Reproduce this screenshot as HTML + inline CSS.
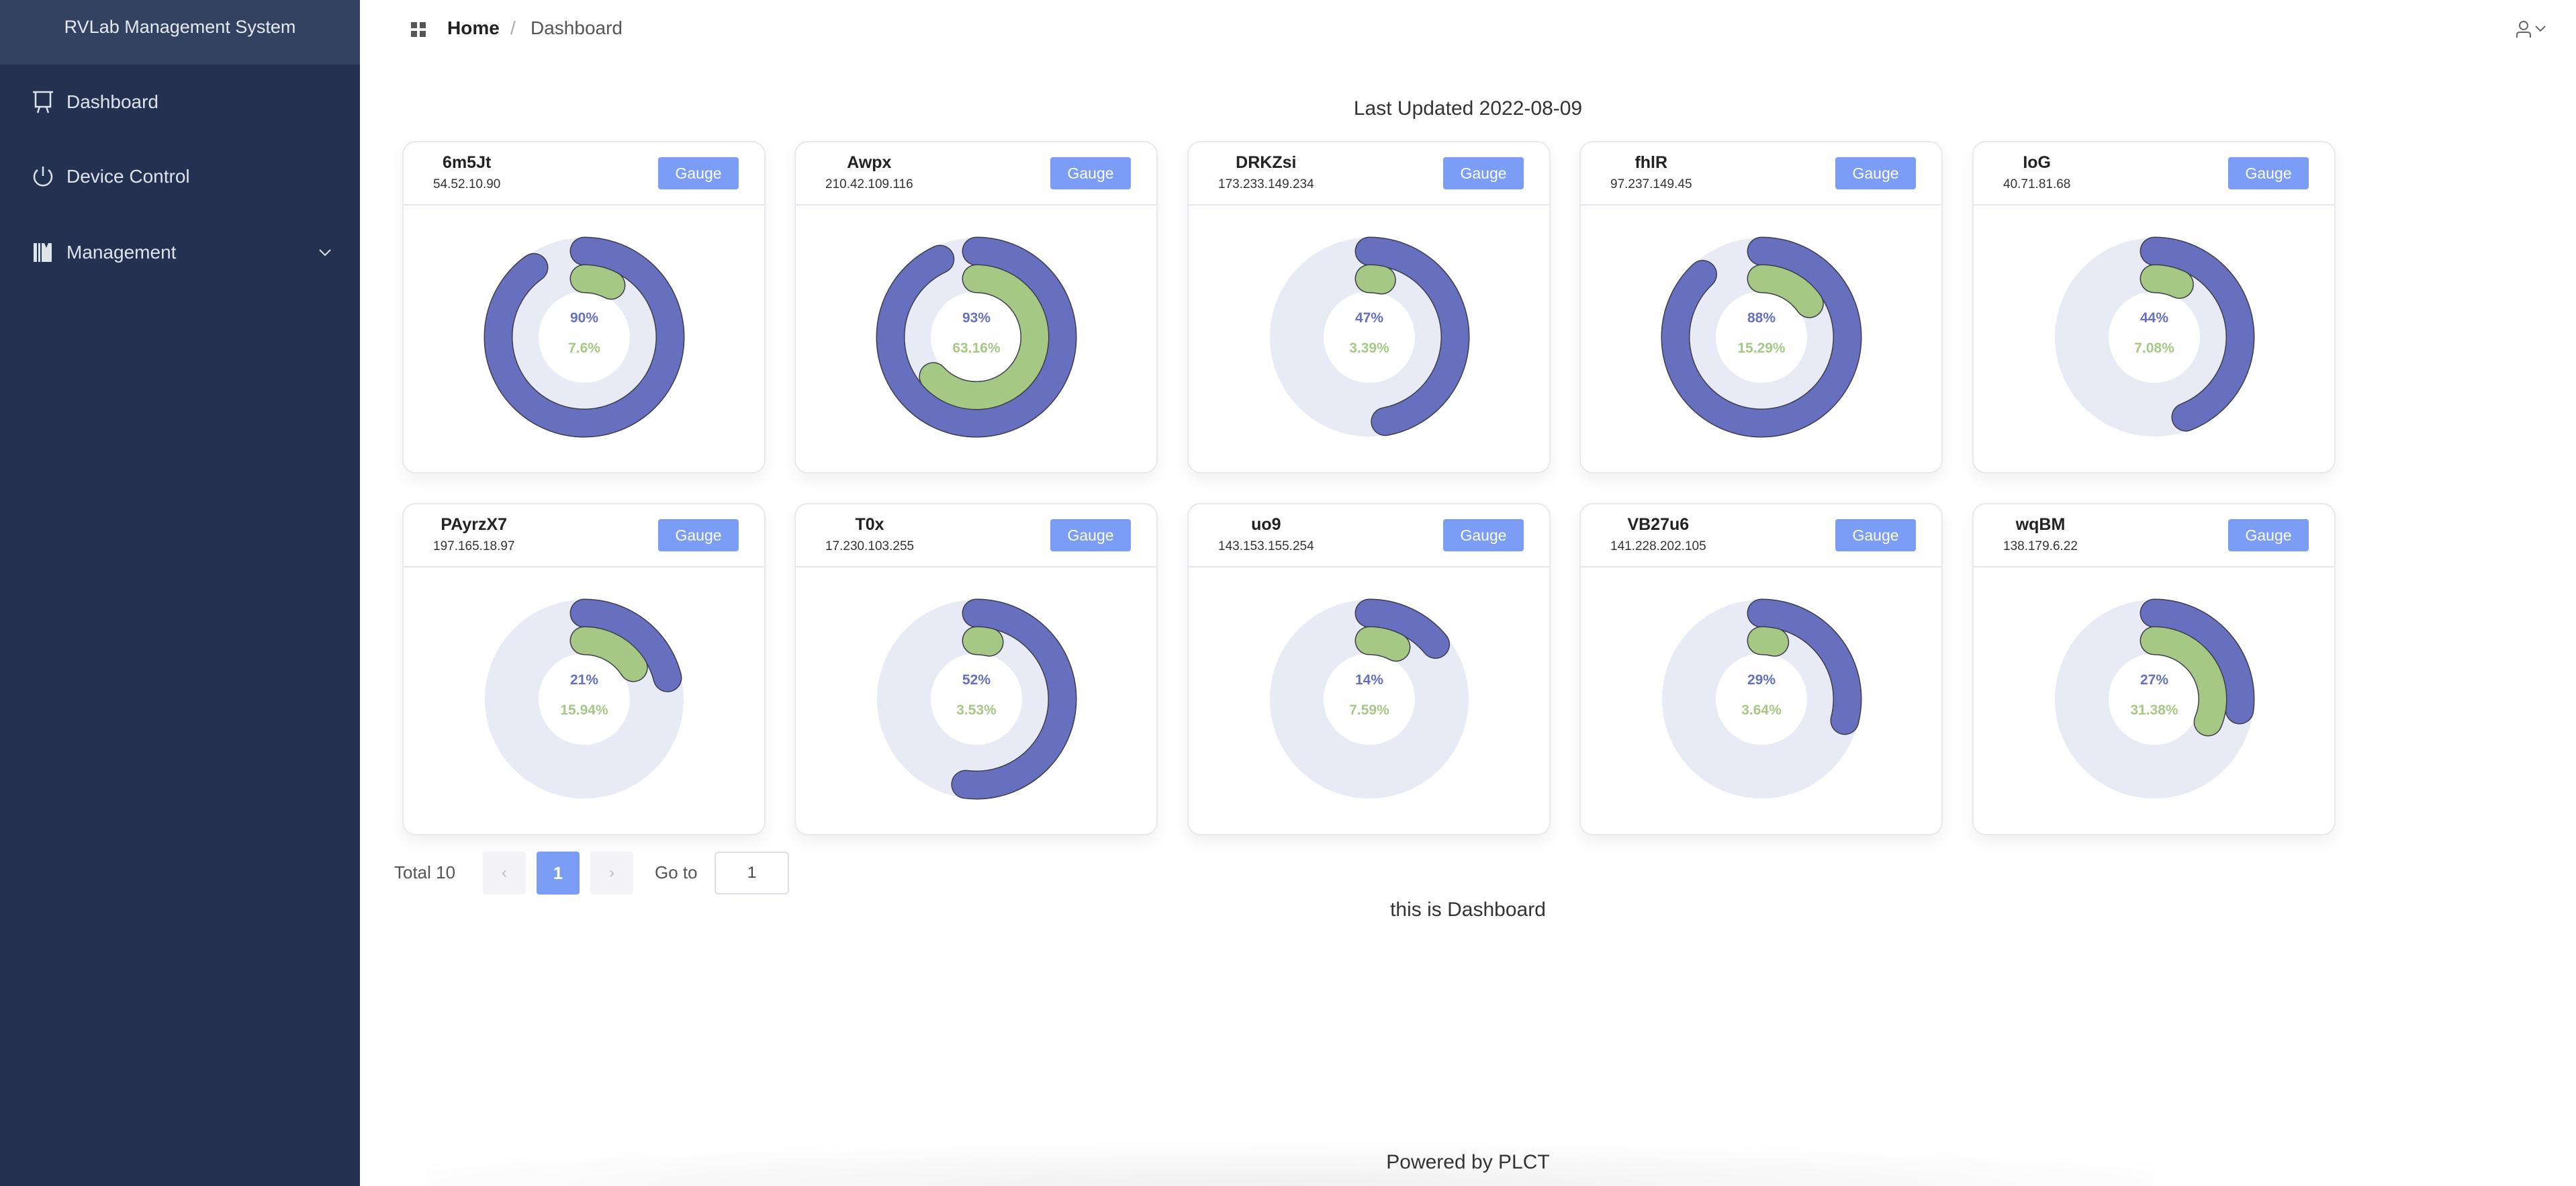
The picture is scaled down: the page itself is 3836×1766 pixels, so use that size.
<!DOCTYPE html>
<html style="width:3836px;height:1766px;overflow:hidden"><head><meta charset="utf-8"><style>
*{margin:0;padding:0;box-sizing:border-box}
body{width:3836px;height:1766px;overflow:hidden;background:#fff;font-family:"Liberation Sans",sans-serif;position:relative}
.side{position:absolute;left:0;top:0;width:536px;height:1766px;background:#253151}
.sh{height:96px;background:#344261;color:#e6e9f0;font-size:27px;text-align:center;line-height:80px}
.mi{position:absolute;left:0;width:536px;color:#dfe3ea;font-size:28px}
.mi span{position:absolute;left:99px;top:-16px}
.mi svg{position:absolute;left:46px;top:-18px}
.abs{position:absolute}
.card{position:absolute;width:541px;height:495px;background:#fff;border:2px solid #e8e8ee;border-radius:20px;box-shadow:0 10px 24px rgba(0,0,0,0.06)}
.card .hd{position:absolute;left:0;top:0;width:537px;height:94px;border-bottom:2px solid #e6e6ee}
.card .ti{position:absolute;left:44px;top:12px;text-align:center;color:#222}
.card .ti b{display:block;font-size:25px;line-height:36px}
.card .ti i{display:block;font-style:normal;font-size:19px;color:#333;line-height:30px}
.btn{position:absolute;left:379px;top:22px;width:120px;height:48px;background:#7b9df6;border-radius:4px;color:#fff;font-size:23px;text-align:center;line-height:48px}
.card svg{position:absolute;left:-2px;top:-2px}
</style></head><body>
<div class="side">
<div class="sh">RVLab Management System</div>
<div class="mi" style="top:152px"><svg width="36" height="36" viewBox="0 0 36 36" fill="none" stroke="#dfe3ea" stroke-width="2.5"><path d="M3 3h30M7 3v22h22V3M13 25l-3 9M23 25l3 9"/></svg><span>Dashboard</span></div>
<div class="mi" style="top:263px"><svg width="36" height="36" viewBox="0 0 36 36" fill="none" stroke="#dfe3ea" stroke-width="2.5"><path d="M18 3v14M10 8a13 13 0 1 0 16 0"/></svg><span>Device Control</span></div>
<div class="mi" style="top:376px"><svg width="36" height="36" viewBox="0 0 36 36" fill="#dfe3ea"><rect x="4" y="4" width="5" height="28"/><rect x="11" y="4" width="3" height="28"/><path d="M16 4h4l3 7 3-7h5v28H16z"/></svg><span>Management</span><svg style="left:472px;top:-8px" width="24" height="16" viewBox="0 0 24 16" fill="none" stroke="#dfe3ea" stroke-width="2"><path d="M4 4l8 8 8-8"/></svg></div>
</div>
<svg class="abs" style="left:612px;top:33px" width="22" height="22" viewBox="0 0 22 22" fill="#555"><rect x="0" y="0" width="9" height="9"/><rect x="13" y="0" width="9" height="9"/><rect x="0" y="13" width="9" height="9"/><rect x="13" y="13" width="9" height="9"/></svg>
<div class="abs" style="left:666px;top:26px;font-size:28px;font-weight:bold;color:#222">Home</div>
<div class="abs" style="left:760px;top:26px;font-size:28px;color:#aaa">/</div>
<div class="abs" style="left:790px;top:26px;font-size:28px;color:#555">Dashboard</div>
<svg class="abs" style="left:3745px;top:30px" width="56" height="28" viewBox="0 0 56 28" fill="none" stroke="#666" stroke-width="2"><circle cx="13" cy="8" r="6"/><path d="M3 26v-4q0-4 4-4h12q4 0 4 4v4"/><path d="M31 9l7 7 7-7"/></svg>
<div class="abs" style="left:536px;width:3300px;top:145px;text-align:center;font-size:30px;color:#333">Last Updated 2022-08-09</div>

<div class="card" style="left:599px;top:210px"><div class="hd"></div><div class="ti"><b>6m5Jt</b><i>54.52.10.90</i></div><div class="btn">Gauge</div>
<svg width="541" height="495"><g transform="translate(271 292) rotate(-90)" fill="none"><circle r="108" stroke="#e8eaf6" stroke-width="80"/>
<circle r="128" stroke="#3d3d4a" stroke-width="43" stroke-linecap="round" stroke-dasharray="723.8 2000"/><circle r="128" stroke="#6670bf" stroke-width="40" stroke-linecap="round" stroke-dasharray="723.8 2000"/>
<circle r="87" stroke="#3d3d4a" stroke-width="43" stroke-linecap="round" stroke-dasharray="41.5 2000"/><circle r="87" stroke="#a6c885" stroke-width="40" stroke-linecap="round" stroke-dasharray="41.5 2000"/></g>
<text x="271" y="270" text-anchor="middle" font-size="21" font-weight="bold" fill="#6670bf" font-family="Liberation Sans">90%</text><text x="271" y="315" text-anchor="middle" font-size="21" font-weight="bold" fill="#a6c885" font-family="Liberation Sans">7.6%</text></svg></div>

<div class="card" style="left:1183px;top:210px"><div class="hd"></div><div class="ti"><b>Awpx</b><i>210.42.109.116</i></div><div class="btn">Gauge</div>
<svg width="541" height="495"><g transform="translate(271 292) rotate(-90)" fill="none"><circle r="108" stroke="#e8eaf6" stroke-width="80"/>
<circle r="128" stroke="#3d3d4a" stroke-width="43" stroke-linecap="round" stroke-dasharray="748 2000"/><circle r="128" stroke="#6670bf" stroke-width="40" stroke-linecap="round" stroke-dasharray="748 2000"/>
<circle r="87" stroke="#3d3d4a" stroke-width="43" stroke-linecap="round" stroke-dasharray="345.3 2000"/><circle r="87" stroke="#a6c885" stroke-width="40" stroke-linecap="round" stroke-dasharray="345.3 2000"/></g>
<text x="271" y="270" text-anchor="middle" font-size="21" font-weight="bold" fill="#6670bf" font-family="Liberation Sans">93%</text><text x="271" y="315" text-anchor="middle" font-size="21" font-weight="bold" fill="#a6c885" font-family="Liberation Sans">63.16%</text></svg></div>

<div class="card" style="left:1768px;top:210px"><div class="hd"></div><div class="ti"><b>DRKZsi</b><i>173.233.149.234</i></div><div class="btn">Gauge</div>
<svg width="541" height="495"><g transform="translate(271 292) rotate(-90)" fill="none"><circle r="108" stroke="#e8eaf6" stroke-width="80"/>
<circle r="128" stroke="#3d3d4a" stroke-width="43" stroke-linecap="round" stroke-dasharray="378 2000"/><circle r="128" stroke="#6670bf" stroke-width="40" stroke-linecap="round" stroke-dasharray="378 2000"/>
<circle r="87" stroke="#3d3d4a" stroke-width="43" stroke-linecap="round" stroke-dasharray="18.5 2000"/><circle r="87" stroke="#a6c885" stroke-width="40" stroke-linecap="round" stroke-dasharray="18.5 2000"/></g>
<text x="271" y="270" text-anchor="middle" font-size="21" font-weight="bold" fill="#6670bf" font-family="Liberation Sans">47%</text><text x="271" y="315" text-anchor="middle" font-size="21" font-weight="bold" fill="#a6c885" font-family="Liberation Sans">3.39%</text></svg></div>

<div class="card" style="left:2352px;top:210px"><div class="hd"></div><div class="ti"><b>fhlR</b><i>97.237.149.45</i></div><div class="btn">Gauge</div>
<svg width="541" height="495"><g transform="translate(271 292) rotate(-90)" fill="none"><circle r="108" stroke="#e8eaf6" stroke-width="80"/>
<circle r="128" stroke="#3d3d4a" stroke-width="43" stroke-linecap="round" stroke-dasharray="707.7 2000"/><circle r="128" stroke="#6670bf" stroke-width="40" stroke-linecap="round" stroke-dasharray="707.7 2000"/>
<circle r="87" stroke="#3d3d4a" stroke-width="43" stroke-linecap="round" stroke-dasharray="83.6 2000"/><circle r="87" stroke="#a6c885" stroke-width="40" stroke-linecap="round" stroke-dasharray="83.6 2000"/></g>
<text x="271" y="270" text-anchor="middle" font-size="21" font-weight="bold" fill="#6670bf" font-family="Liberation Sans">88%</text><text x="271" y="315" text-anchor="middle" font-size="21" font-weight="bold" fill="#a6c885" font-family="Liberation Sans">15.29%</text></svg></div>

<div class="card" style="left:2937px;top:210px"><div class="hd"></div><div class="ti"><b>IoG</b><i>40.71.81.68</i></div><div class="btn">Gauge</div>
<svg width="541" height="495"><g transform="translate(271 292) rotate(-90)" fill="none"><circle r="108" stroke="#e8eaf6" stroke-width="80"/>
<circle r="128" stroke="#3d3d4a" stroke-width="43" stroke-linecap="round" stroke-dasharray="353.9 2000"/><circle r="128" stroke="#6670bf" stroke-width="40" stroke-linecap="round" stroke-dasharray="353.9 2000"/>
<circle r="87" stroke="#3d3d4a" stroke-width="43" stroke-linecap="round" stroke-dasharray="38.7 2000"/><circle r="87" stroke="#a6c885" stroke-width="40" stroke-linecap="round" stroke-dasharray="38.7 2000"/></g>
<text x="271" y="270" text-anchor="middle" font-size="21" font-weight="bold" fill="#6670bf" font-family="Liberation Sans">44%</text><text x="271" y="315" text-anchor="middle" font-size="21" font-weight="bold" fill="#a6c885" font-family="Liberation Sans">7.08%</text></svg></div>

<div class="card" style="left:599px;top:749px"><div class="hd"></div><div class="ti"><b>PAyrzX7</b><i>197.165.18.97</i></div><div class="btn">Gauge</div>
<svg width="541" height="495"><g transform="translate(271 292) rotate(-90)" fill="none"><circle r="108" stroke="#e8eaf6" stroke-width="80"/>
<circle r="128" stroke="#3d3d4a" stroke-width="43" stroke-linecap="round" stroke-dasharray="168.9 2000"/><circle r="128" stroke="#6670bf" stroke-width="40" stroke-linecap="round" stroke-dasharray="168.9 2000"/>
<circle r="87" stroke="#3d3d4a" stroke-width="43" stroke-linecap="round" stroke-dasharray="87.1 2000"/><circle r="87" stroke="#a6c885" stroke-width="40" stroke-linecap="round" stroke-dasharray="87.1 2000"/></g>
<text x="271" y="270" text-anchor="middle" font-size="21" font-weight="bold" fill="#6670bf" font-family="Liberation Sans">21%</text><text x="271" y="315" text-anchor="middle" font-size="21" font-weight="bold" fill="#a6c885" font-family="Liberation Sans">15.94%</text></svg></div>

<div class="card" style="left:1183px;top:749px"><div class="hd"></div><div class="ti"><b>T0x</b><i>17.230.103.255</i></div><div class="btn">Gauge</div>
<svg width="541" height="495"><g transform="translate(271 292) rotate(-90)" fill="none"><circle r="108" stroke="#e8eaf6" stroke-width="80"/>
<circle r="128" stroke="#3d3d4a" stroke-width="43" stroke-linecap="round" stroke-dasharray="418.2 2000"/><circle r="128" stroke="#6670bf" stroke-width="40" stroke-linecap="round" stroke-dasharray="418.2 2000"/>
<circle r="87" stroke="#3d3d4a" stroke-width="43" stroke-linecap="round" stroke-dasharray="19.3 2000"/><circle r="87" stroke="#a6c885" stroke-width="40" stroke-linecap="round" stroke-dasharray="19.3 2000"/></g>
<text x="271" y="270" text-anchor="middle" font-size="21" font-weight="bold" fill="#6670bf" font-family="Liberation Sans">52%</text><text x="271" y="315" text-anchor="middle" font-size="21" font-weight="bold" fill="#a6c885" font-family="Liberation Sans">3.53%</text></svg></div>

<div class="card" style="left:1768px;top:749px"><div class="hd"></div><div class="ti"><b>uo9</b><i>143.153.155.254</i></div><div class="btn">Gauge</div>
<svg width="541" height="495"><g transform="translate(271 292) rotate(-90)" fill="none"><circle r="108" stroke="#e8eaf6" stroke-width="80"/>
<circle r="128" stroke="#3d3d4a" stroke-width="43" stroke-linecap="round" stroke-dasharray="112.6 2000"/><circle r="128" stroke="#6670bf" stroke-width="40" stroke-linecap="round" stroke-dasharray="112.6 2000"/>
<circle r="87" stroke="#3d3d4a" stroke-width="43" stroke-linecap="round" stroke-dasharray="41.5 2000"/><circle r="87" stroke="#a6c885" stroke-width="40" stroke-linecap="round" stroke-dasharray="41.5 2000"/></g>
<text x="271" y="270" text-anchor="middle" font-size="21" font-weight="bold" fill="#6670bf" font-family="Liberation Sans">14%</text><text x="271" y="315" text-anchor="middle" font-size="21" font-weight="bold" fill="#a6c885" font-family="Liberation Sans">7.59%</text></svg></div>

<div class="card" style="left:2352px;top:749px"><div class="hd"></div><div class="ti"><b>VB27u6</b><i>141.228.202.105</i></div><div class="btn">Gauge</div>
<svg width="541" height="495"><g transform="translate(271 292) rotate(-90)" fill="none"><circle r="108" stroke="#e8eaf6" stroke-width="80"/>
<circle r="128" stroke="#3d3d4a" stroke-width="43" stroke-linecap="round" stroke-dasharray="233.2 2000"/><circle r="128" stroke="#6670bf" stroke-width="40" stroke-linecap="round" stroke-dasharray="233.2 2000"/>
<circle r="87" stroke="#3d3d4a" stroke-width="43" stroke-linecap="round" stroke-dasharray="19.9 2000"/><circle r="87" stroke="#a6c885" stroke-width="40" stroke-linecap="round" stroke-dasharray="19.9 2000"/></g>
<text x="271" y="270" text-anchor="middle" font-size="21" font-weight="bold" fill="#6670bf" font-family="Liberation Sans">29%</text><text x="271" y="315" text-anchor="middle" font-size="21" font-weight="bold" fill="#a6c885" font-family="Liberation Sans">3.64%</text></svg></div>

<div class="card" style="left:2937px;top:749px"><div class="hd"></div><div class="ti"><b>wqBM</b><i>138.179.6.22</i></div><div class="btn">Gauge</div>
<svg width="541" height="495"><g transform="translate(271 292) rotate(-90)" fill="none"><circle r="108" stroke="#e8eaf6" stroke-width="80"/>
<circle r="128" stroke="#3d3d4a" stroke-width="43" stroke-linecap="round" stroke-dasharray="217.1 2000"/><circle r="128" stroke="#6670bf" stroke-width="40" stroke-linecap="round" stroke-dasharray="217.1 2000"/>
<circle r="87" stroke="#3d3d4a" stroke-width="43" stroke-linecap="round" stroke-dasharray="171.5 2000"/><circle r="87" stroke="#a6c885" stroke-width="40" stroke-linecap="round" stroke-dasharray="171.5 2000"/></g>
<text x="271" y="270" text-anchor="middle" font-size="21" font-weight="bold" fill="#6670bf" font-family="Liberation Sans">27%</text><text x="271" y="315" text-anchor="middle" font-size="21" font-weight="bold" fill="#a6c885" font-family="Liberation Sans">31.38%</text></svg></div>

<div class="abs" style="left:587px;top:1284px;font-size:26px;color:#555">Total 10</div>
<div class="abs" style="left:719px;top:1268px;width:64px;height:64px;background:#f4f4f7;border-radius:4px;color:#bbb;font-size:24px;text-align:center;line-height:64px">&#8249;</div>
<div class="abs" style="left:799px;top:1268px;width:64px;height:64px;background:#7b9df6;border-radius:4px;color:#fff;font-size:26px;text-align:center;line-height:64px;font-weight:bold">1</div>
<div class="abs" style="left:879px;top:1268px;width:64px;height:64px;background:#f4f4f7;border-radius:4px;color:#bbb;font-size:24px;text-align:center;line-height:64px">&#8250;</div>
<div class="abs" style="left:975px;top:1284px;font-size:26px;color:#555">Go to</div>
<div class="abs" style="left:1064px;top:1268px;width:111px;height:64px;border:2px solid #dcdfe6;border-radius:6px;color:#444;font-size:24px;text-align:center;line-height:60px">1</div>
<div class="abs" style="left:536px;width:3300px;top:1338px;text-align:center;font-size:30px;color:#333">this is Dashboard</div>
<div class="abs" style="left:636px;top:1696px;width:2570px;height:70px;background:radial-gradient(ellipse 60% 100% at 50% 100%,rgba(0,0,0,0.06),rgba(0,0,0,0) 100%)"></div>
<div class="abs" style="left:536px;width:3300px;top:1714px;text-align:center;font-size:30px;color:#333">Powered by PLCT</div>
</body></html>
